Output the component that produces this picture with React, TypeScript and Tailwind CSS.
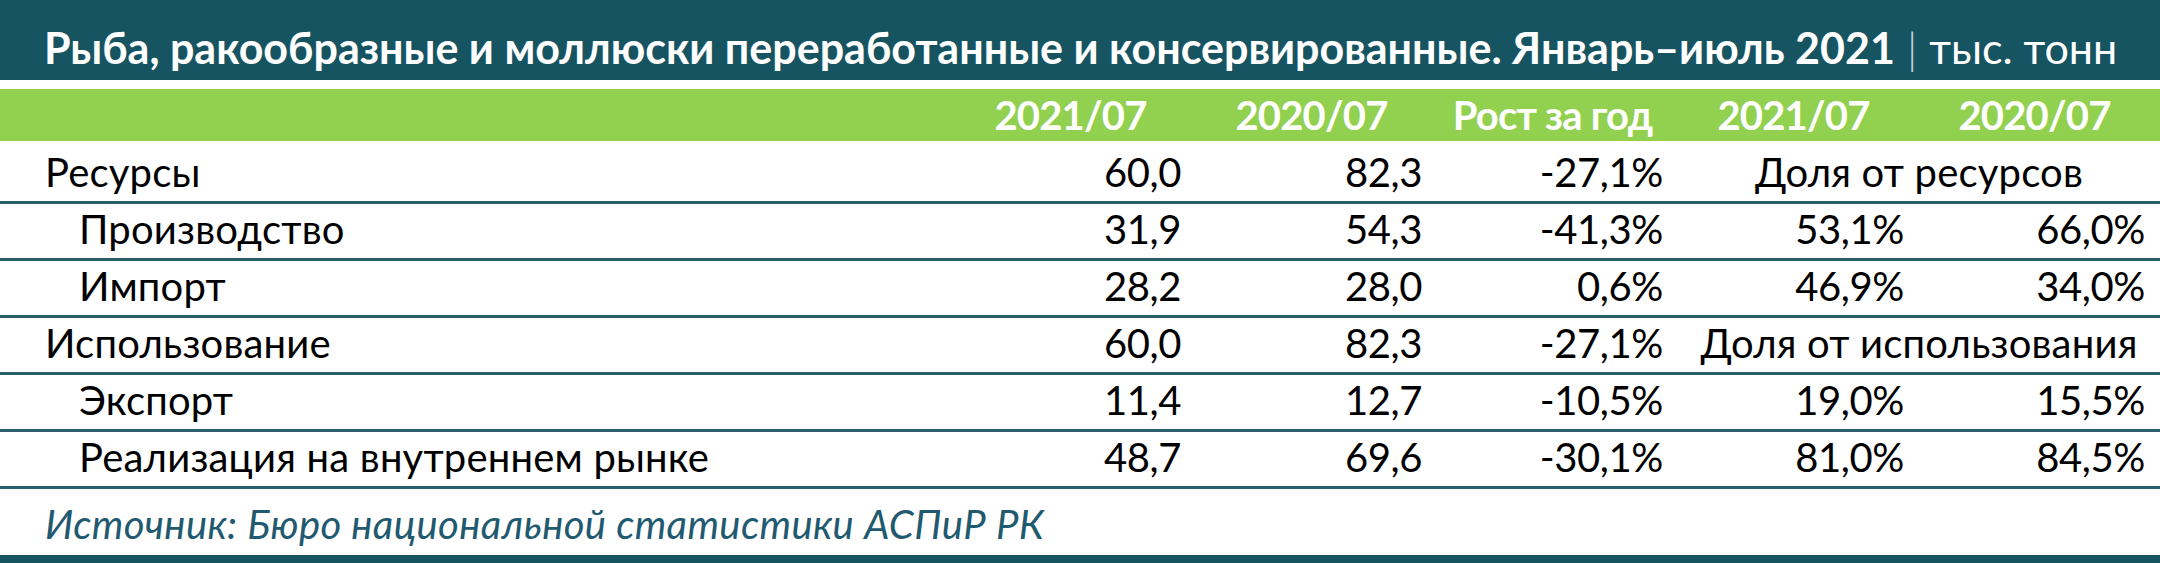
import React from 'react';

type Row = {
  label: string;
  indent?: boolean;
  values: string[];
  shares?: string[];
  note?: string;
};

const rows: Row[] = [
  { label: 'Ресурсы', values: ['60,0', '82,3', '-27,1%'], note: 'Доля от ресурсов' },
  { label: 'Производство', indent: true, values: ['31,9', '54,3', '-41,3%'], shares: ['53,1%', '66,0%'] },
  { label: 'Импорт', indent: true, values: ['28,2', '28,0', '0,6%'], shares: ['46,9%', '34,0%'] },
  { label: 'Использование', values: ['60,0', '82,3', '-27,1%'], note: 'Доля от использования' },
  { label: 'Экспорт', indent: true, values: ['11,4', '12,7', '-10,5%'], shares: ['19,0%', '15,5%'] },
  { label: 'Реализация на внутреннем рынке', indent: true, values: ['48,7', '69,6', '-30,1%'], shares: ['81,0%', '84,5%'] },
];

const headers = ['2021/07', '2020/07', 'Рост за год', '2021/07', '2020/07'];

const font = { fontFamily: 'Lato, "Noto Sans", sans-serif' };

export default function App() {
  return (
    <div className="w-[2160px] h-[563px] bg-white flex flex-col overflow-hidden" style={font}>
      {/* title band */}
      <div className="h-[80px] bg-[#175462] flex items-end pb-[11px] pl-[44px] text-white text-[43px] leading-none">
        <span className="font-bold">Рыба, ракообразные и моллюски переработанные и консервированные. Январь–июль 2021</span>
        <span className="mx-[12px] font-light text-[#c9d6da]">|</span>
        <span>тыс. тонн</span>
      </div>

      {/* column headers */}
      <div className="mt-[9px] h-[52px] bg-[#92d050] flex items-end pb-[6px] text-white font-bold text-[40px] leading-none tracking-[-0.8px]">
        <div className="flex-1" />
        {headers.map((h, i) => (
          <div key={i} className="w-[241px] text-center pr-[10px]">{h}</div>
        ))}
      </div>

      {/* body rows */}
      {rows.map((r, idx) => (
        <div
          key={idx}
          className={`flex items-end pb-[9px] border-b-[3px] border-[#2a5f6b] text-[40px] leading-none text-black tracking-[0.2px] ${idx === 0 ? 'h-[63px]' : 'h-[57px]'}`}
        >
          <div className={`flex-1 ${r.indent ? 'pl-[79px]' : 'pl-[45px]'}`}>{r.label}</div>
          {r.values.map((v, i) => (
            <div key={i} className="w-[241px] text-right pr-[15px] tracking-[-0.4px]">{v}</div>
          ))}
          {r.note ? (
            <div className="w-[482px] text-center">{r.note}</div>
          ) : (
            r.shares!.map((v, i) => (
              <div key={i} className="w-[241px] text-right pr-[15px] tracking-[-0.4px]">{v}</div>
            ))
          )}
        </div>
      ))}

      {/* source */}
      <div className="flex-1 flex items-center pl-[45px] pt-[4px]">
        <span className="italic text-[40px] leading-none text-[#1f5a70] tracking-[0.4px]">
          Источник: Бюро национальной статистики АСПиР РК
        </span>
      </div>
      <div className="h-[8px] bg-[#175462]" />
    </div>
  );
}
